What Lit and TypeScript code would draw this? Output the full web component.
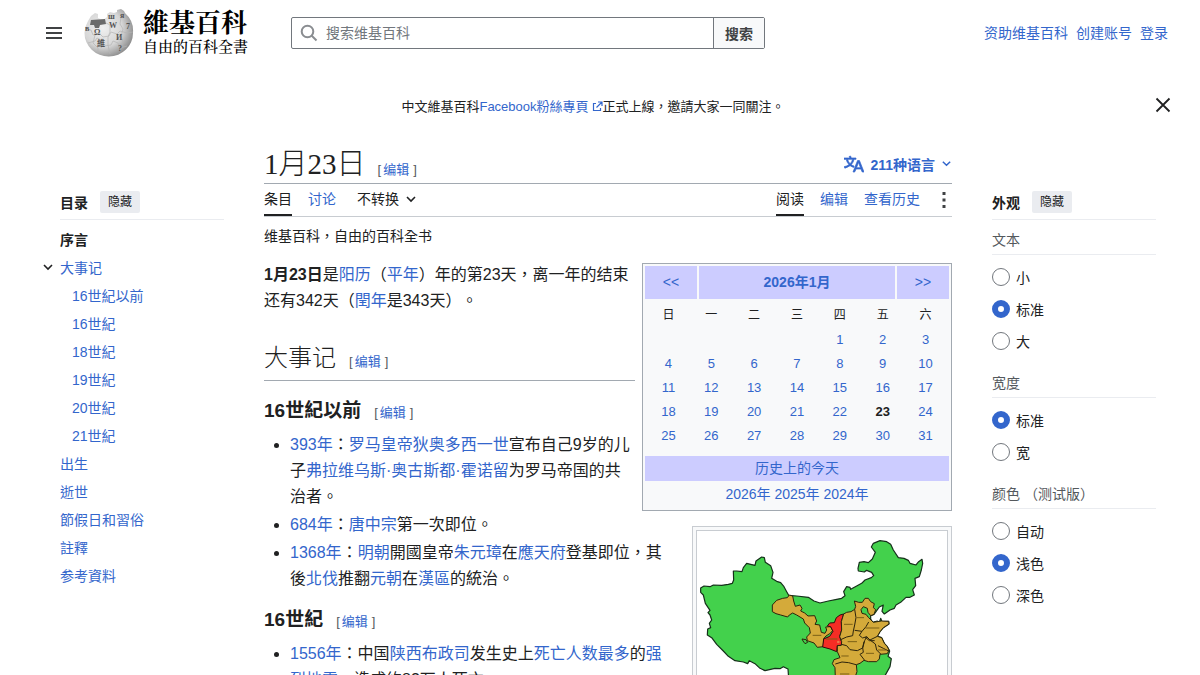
import { LitElement, html, css, svg } from "lit";
import { customElement, state } from "lit/decorators.js";

const chevron = svg`<path d="M2 4l4 4 4-4" fill="none" stroke="currentColor" stroke-width="1.6"/>`;

@customElement("wiki-globe")
class WikiGlobe extends LitElement {
  static styles = css`
    :host { display: block; width: 50px; height: 48px; }
    svg { display: block; }
    text { font-family: "Liberation Serif", "Noto Sans CJK TC", serif; font-size: 8px; font-weight: 700; fill: #555; }
  `;
  render() {
    return html`<svg width="50" height="48" viewBox="0 0 50 48" aria-hidden="true">
      <defs>
        <radialGradient id="ball" cx="38%" cy="40%" r="66%">
          <stop offset="0" stop-color="#f0f0f0"/><stop offset=".6" stop-color="#d6d6d6"/><stop offset="1" stop-color="#8a8a8a"/>
        </radialGradient>
      </defs>
      <path d="M11 4l3 1 0 4 5 2 4-3 0-3 3-2 4 1 3-1 0-2 4-1 3 2 1 2A24 24 0 0 1 49 24 24 23.500 0 0 1 25 47.500 24 23.500 0 0 1 .500 24 24 24 0 0 1 4 12l3-5z" fill="url(#ball)"/>
      <path d="M7 11l14-1 1 5-6 1-1 3-4 0-1-3-4 0z" fill="#6a6a6a"/>
      <path d="M1 20l6 1 2 5 7-1 3 3 6-1 2-4 6 2 3-3 7 2 6-1M4 34l7-2 2-3 6 3 1 5 7-1 2-4 5 2 2 5 7-2M11 26l-2 8 5 5 0 5M22 14l4 2 0 7-2 5 0 8 2 9M37 8l-1 7 3 5-2 7 2 6-3 9" fill="none" stroke="#b4b4b4" stroke-width=".7"/>
      <text x="10" y="26">Ω</text><text x="25" y="19">W</text><text x="32" y="31">И</text><text x="42" y="20">7</text><text x="13" y="37">維</text><text x="34" y="42">?</text><text x="1" y="22">в</text><text x="24" y="10">ш</text><text x="36" y="9">я</text>
    </svg>`;
  }
}

@customElement("china-map")
class ChinaMap extends LitElement {
  static styles = css`
    :host { display: block; }
    svg { display: block; width: 100%; }
    .land { fill: #43d14c; stroke: #15301a; stroke-width: 3.6; stroke-linejoin: round; }
    .felt { fill: #d4aa3a; stroke: #2b230c; stroke-width: 3; stroke-linejoin: round; }
    .center { fill: #f52d25; stroke: #2b0c0c; stroke-width: 3; stroke-linejoin: round; }
    .line { fill: none; stroke: #2b230c; stroke-width: 3; stroke-linejoin: round; }
    .tag { fill: none; stroke: #7a5f16; stroke-width: 3; }
  `;
  render() {
    return html`<svg viewBox="51 48 750 610" role="img" aria-label="1556">
      <path class="land" d="M62 219L72 213 90 215 100 210 125 211 145 208 157 205 161 195 160 168 170 168 186 170 190 158 200 145 212 148 225 151 228 138 245 126 253 128 256 142 272 152 279 172 275 190 290 199 302 203 312 215 320 230 326 241 350 243 385 247 402 258 420 264 445 258 470 253 485 250 495 242 491 230 500 215 510 217 512 223 530 213 545 205 555 195 574 188 581 182 575 172 560 166 553 171 535 168 534 160 538 142 552 140 565 143 577 132 586 112 574 96 580 85 600 77 620 80 632 88 640 105 655 128 672 130 685 136 690 145 708 150 716 140 726 133 728 145 724 165 718 185 705 190 707 212 698 224 703 240 690 247 678 247 662 262 648 270 643 280 630 285 613 297 606 289 610 270 598 276 588 290 582 298 572 302 572 312 578 322 592 318 597 326 602 310 606 320 626 319 627 327 610 338 600 350 592 364 605 368 613 385 622 395 629 408 624 424 634 431 630 455 615 482 600 530 560 575 500 610 440 600 400 580 350 555 332 520 326 490 324 462 310 455 300 461 285 460 255 467 240 460 225 446 208 437 203 446 190 441 165 437 145 424 130 408 110 388 95 368 82 360 83 342 92 338 88 325 95 315 90 300 84 293 90 286 76 265 70 240 62 232z"/>
      <path class="felt" d="M277 270L290 256 308 250 322 248 328 240 338 243 341 258 346 274 360 270 366 280 362 288 374 294 384 303 404 302 410 318 405 328 419 330 424 352 435 355 440 345 437 336 452 335 458 347 449 356 438 363 431 371 430 395 412 397 402 384 382 377 380 366 391 354 388 338 374 324 370 312 350 300 338 294 328 300 323 306 302 300 288 296 277 290z"/>
      <path class="center" d="M491 297L484 320 485 345 479 365 485 380 484 391 472 392 470 410 450 402 428 396 431 372 449 364 459 349 452 335 442 333 449 324 463 323 469 308 480 300z"/>
      <path class="felt" d="M491 297L500 292 513 290 524 283 527 274 523 258 536 262 547 262 555 250 565 250 572 260 583 266 580 278 587 284 582 298 572 302 564 292 562 280 550 275 543 284 546 295 558 298 565 307 580 322 604 318 626 319 627 327 610 338 600 350 592 364 605 368 613 385 622 395 627 405 622 416 600 418 598 432 590 440 565 440 552 436 540 445 529 449 531 470 524 490 524 540 470 545 466 490 465 458 457 446 462 434 480 428 472 410 472 392 484 391 485 380 479 365 485 345 484 320z"/>
      <path class="line" d="M524 283L528 308 524 330 520 348 518 362 500 366 482 374M524 346l22 3 12-14 8-14M546 349l-8 12 10 8 12-4M560 365l-6 12-6 22-16 8-22-3-10-12-16-4M560 365l10 10 22-11M570 375l16 12 4 18 12 12M552 380l-4 18 2 14-10 6 14 18M466 447l20-6 20 2 22 6M594 392l16 8 16 8M556 367l12 10 16 0"/>
      <path class="line" d="M366 372l12 2 5 8-8 4-6-8z"/>
      <path class="tag" d="M398 361h26M492 328h26M530 308h22M556 339h42M503 380h28M484 423h22M558 415h24M594 405h24M480 477h28M438 372h34"/>
      <circle cx="475" cy="381" r="4" fill="#e87b4b"/>
    </svg>`;
  }
}

@customElement("month-calendar")
class MonthCalendar extends LitElement {
  static styles = css`
    :host { display: block; box-sizing: border-box; border: 1px solid #a2a9b1; background: #f8f9fa; padding: 2px; font-size: 14px; text-align: center; }
    a { color: #3366cc; text-decoration: none; }
    .nav { display: grid; grid-template-columns: 52px 1fr 52px; gap: 2px; line-height: 33px; }
    .nav a, .today { background: #ccccff; }
    .current { font-weight: 700; }
    table { width: 300px; max-width: 100%; margin: 4px auto 8px; border-collapse: collapse; table-layout: fixed; font-size: 13px; line-height: 24px; }
    th, td { padding: 0; }
    th { font-size: 12px; font-weight: 400; line-height: 25px; }
    .today { display: block; line-height: 25px; }
    .years { line-height: 27px; }
  `;
  render() {
    const weeks = [0, 1, 2, 3, 4].map((w) => [0, 1, 2, 3, 4, 5, 6].map((d) => w * 7 + d - 3));
    return html`
      <div class="nav"><a href="#">&lt;&lt;</a><a class="current" href="#">2026年1月</a><a href="#">&gt;&gt;</a></div>
      <table>
        <thead><tr>${[..."日一二三四五六"].map((d) => html`<th scope="col">${d}</th>`)}</tr></thead>
        <tbody>${weeks.map((week) => html`<tr>${week.map((n) => html`<td>${n < 1 ? "" : n === 23 ? html`<b>23</b>` : html`<a href="#">${n}</a>`}</td>`)}</tr>`)}</tbody>
      </table>
      <a class="today" href="#">历史上的今天</a>
      <div class="years"><a href="#">2026年</a> <a href="#">2025年</a> <a href="#">2024年</a></div>`;
  }
}

interface Group { name: string; title: string; options: string[]; }

@customElement("app-root")
class AppRoot extends LitElement {
  @state() private chosen: Record<string, string> = { text: "标准", width: "标准", color: "浅色" };

  static styles = css`
    :host { display: block; height: 100vh; overflow: hidden; background: #fff; color: #202122; font-family: "Liberation Sans", "Noto Sans CJK TC", sans-serif; font-size: 14px; text-spacing-trim: space-all; }
    a { color: #3366cc; text-decoration: none; }
    button, input { font: inherit; color: inherit; margin: 0; }
    button { cursor: pointer; }
    svg { flex: none; }
    h1, h2, h3, p, ul { margin: 0; }

    .header { display: flex; align-items: center; height: 66px; padding: 0 32px 0 44px; }
    .menu { display: flex; border: 0; background: none; padding: 0; margin-right: 20px; }
    .logo { display: flex; align-items: center; gap: 9px; width: 167px; color: #000; }
    .brand { display: block; font-family: "Liberation Serif", "Noto Serif CJK TC", "Noto Sans CJK TC", serif; font-size: 26px; font-weight: 700; line-height: 28px; }
    .slogan { display: block; font-family: "Liberation Serif", "Noto Serif CJK TC", "Noto Sans CJK TC", serif; font-size: 15px; font-weight: 500; line-height: 18px; }
    .search { display: flex; flex: 0 1 474px; height: 32px; margin-left: 40px; box-sizing: border-box; border: 1px solid #72777d; border-radius: 2px; }
    .field { display: flex; align-items: center; flex: 1; gap: 8px; padding-left: 8px; color: #72777d; }
    .field input { flex: 1; min-width: 0; border: 0; padding: 0; outline: 0; background: none; }
    .field input::placeholder { color: #72777d; opacity: 1; }
    .search button { border: 0; border-left: 1px solid #72777d; background: #f8f9fa; padding: 0 11px; font-weight: 700; color: #404244; }
    .user { display: flex; gap: 8px; margin-left: auto; padding-bottom: 2px; }

    .notice { display: flex; align-items: center; height: 78px; padding: 0 28px 0 32px; font-size: 13px; }
    .notice p { flex: 1; text-align: center; }
    .external { margin-left: 3px; vertical-align: -1px; }
    .close { display: flex; border: 0; padding: 0; background: none; }

    .page { display: grid; grid-template-columns: 180px minmax(0, 1fr) 164px; column-gap: 40px; padding: 0 44px; }
    .toc { padding: 42px 0 0 16px; }
    .side { padding-top: 42px; }
    .panel-head { display: flex; align-items: center; gap: 12px; height: 31px; padding-bottom: 2px; border-bottom: 1px solid #eaecf0; font-weight: 700; }
    .panel-head button { border: 0; border-radius: 2px; background: #eaecf0; font-size: 12px; font-weight: 400; line-height: 22px; padding: 0 8px; }
    .toc ul { list-style: none; padding: 6px 0 0; line-height: 28px; }
    .toc ul ul { padding: 0 0 0 12px; }
    .toc .lead { color: #202122; font-weight: 700; }
    .expandable { position: relative; }
    .toggle { position: absolute; left: -18px; top: 7px; display: flex; border: 0; background: none; padding: 0; }

    .title-row { display: flex; align-items: center; justify-content: space-between; height: 39px; border-bottom: 1px solid #a2a9b1; }
    .title { display: flex; align-items: baseline; gap: 12px; }
    h1 { font: 300 29px/38px "Liberation Serif", "Noto Sans CJK TC", serif; }
    .edit { font-family: "Liberation Sans", "Noto Sans CJK TC", sans-serif; font-size: 13px; font-weight: 400; line-height: 16px; color: #54595d; }
    .edit a { margin: 0 4px 0 2px; }
    .languages { display: flex; align-items: center; gap: 6px; border: 0; background: none; padding: 0; color: #3366cc; font-weight: 700; }
    .tabs { display: flex; align-items: center; gap: 16px; height: 32px; border-bottom: 1px solid #c8ccd1; line-height: 30px; }
    .tabs a, .variant { height: 32px; box-sizing: border-box; }
    .tabs .selected { color: #202122; border-bottom: 2px solid #202122; }
    .variant { display: flex; align-items: center; gap: 6px; border: 0; background: none; padding: 0 0 2px 5px; }
    .views { display: flex; align-items: center; gap: 16px; margin-left: auto; }
    .more { display: flex; border: 0; background: none; padding: 0; }
    .tagline { line-height: 20px; margin: 9px 0 16px; }

    .article { font-size: 16px; line-height: 26px; }
    month-calendar { float: right; clear: right; width: 310px; margin: 1px 0 15px 7px; line-height: 24px; }
    .figure { float: right; clear: right; box-sizing: border-box; width: 260px; margin: 0 0 16px 16px; border: 1px solid #c8ccd1; background: #f8f9fa; padding: 3px; }
    .frame { border: 1px solid #c8ccd1; background: #fff; }
    .article h2 { display: flow-root; font: 300 24px/40px "Liberation Serif", "Noto Sans CJK TC", serif; border-bottom: 1px solid #a2a9b1; margin: 24px 0 15px; padding-bottom: 2px; }
    .article h3 { font-size: 19px; line-height: 30px; margin: 13px 0 6px; }
    .article .edit { margin-left: 13px; }
    .article ul { padding-left: 26px; }
    .article li { margin-bottom: 2px; }

    fieldset { border: 0; margin: 0 0 14px; padding: 0; min-width: 0; }
    legend { box-sizing: border-box; width: 100%; padding: 0 0 2px; margin-bottom: 6px; line-height: 24px; color: #54595d; border-bottom: 1px solid #eaecf0; }
    .groups { padding-top: 8px; }
    .option { display: flex; align-items: center; gap: 6px; height: 32px; }
    .option input { appearance: none; box-sizing: border-box; width: 18px; height: 18px; border: 1px solid #72777d; border-radius: 50%; background: #fff; }
    .option input:checked { border: 6px solid #3366cc; }
  `;

  private edit() {
    return html`<span class="edit">[<a href="#">编辑</a>]</span>`;
  }

  private group(g: Group) {
    return html`<fieldset><legend>${g.title}</legend>${g.options.map((o) => html`
      <label class="option"><input type="radio" name=${g.name} .checked=${this.chosen[g.name] === o}
        @change=${() => (this.chosen = { ...this.chosen, [g.name]: o })}>${o}</label>`)}</fieldset>`;
  }

  render() {
    const centuries = ["16世紀以前", "16世紀", "18世紀", "19世紀", "20世紀", "21世紀"];
    const sections = ["出生", "逝世", "節假日和習俗", "註釋", "参考資料"];
    const groups: Group[] = [
      { name: "text", title: "文本", options: ["小", "标准", "大"] },
      { name: "width", title: "宽度", options: ["标准", "宽"] },
      { name: "color", title: "颜色 （测试版）", options: ["自动", "浅色", "深色"] },
    ];
    return html`
      <header class="header">
        <button class="menu" aria-label="主菜单"><svg width="20" height="20" viewBox="0 0 20 20"><path d="M2 5h16M2 10h16M2 15h16" stroke="#404244" stroke-width="2"/></svg></button>
        <a class="logo" href="#"><wiki-globe></wiki-globe><span><span class="brand">維基百科</span><span class="slogan">自由的百科全書</span></span></a>
        <form class="search" @submit=${(e: Event) => e.preventDefault()}>
          <label class="field"><svg width="18" height="18" viewBox="0 0 18 18" fill="none" stroke="#8a8d91" stroke-width="2"><circle cx="7.5" cy="7.5" r="5.8"/><path d="M11.5 11.5l5 5"/></svg>
            <input type="search" aria-label="搜索维基百科" placeholder="搜索维基百科"></label>
          <button>搜索</button>
        </form>
        <nav class="user"><a href="#">资助维基百科</a><a href="#">创建账号</a><a href="#">登录</a></nav>
      </header>
      <div class="notice">
        <p>中文維基百科<a href="#">Facebook粉絲專頁<svg class="external" width="11" height="11" viewBox="0 0 11 11" fill="none" stroke="currentColor" stroke-width="1.2"><path d="M4 2.500H1.500v7h7V7M6 1h4v4M10 1L4.500 6.500"/></svg></a>正式上線，邀請大家一同關注。</p>
        <button class="close" aria-label="关闭"><svg width="18" height="18" viewBox="0 0 18 18"><path d="M2.500 2.500l13 13M15.500 2.500l-13 13" stroke="#202122" stroke-width="1.800"/></svg></button>
      </div>
      <div class="page">
        <nav class="toc">
          <div class="panel-head">目录<button>隐藏</button></div>
          <ul>
            <li><a class="lead" href="#">序言</a></li>
            <li class="expandable"><button class="toggle" aria-label="展开"><svg width="12" height="12" viewBox="0 0 12 12">${chevron}</svg></button><a href="#">大事记</a>
              <ul>${centuries.map((c) => html`<li><a href="#">${c}</a></li>`)}</ul></li>
            ${sections.map((s) => html`<li><a href="#">${s}</a></li>`)}
          </ul>
        </nav>
        <main>
          <div class="title-row">
            <div class="title"><h1>1月23日</h1>${this.edit()}</div>
            <button class="languages"><svg width="20" height="20" viewBox="0 0 20 20" fill="#3366cc" stroke="#3366cc" stroke-width=".7"><path d="M20 18h-1.440a.6.600 0 0 1-.4-.120.800.800 0 0 1-.230-.310L17 15h-5l-1 2.540a.8.800 0 0 1-.220.300.600.600 0 0 1-.4.140H9l4.550-11.470h1.890zm-3.530-4.310L14.890 9.500a12 12 0 0 1-.390-1.240q-.090.370-.190.690l-.190.560-1.580 4.190zm-6.300-1.580a13.400 13.400 0 0 1-2.910-1.410 11.460 11.460 0 0 0 2.810-5.370H12V4H7.310a4 4 0 0 0-.200-.560C6.870 2.790 6.600 2 6.600 2l-1.470.500s.4.890.600 1.500H0v1.330h2.150A11.230 11.230 0 0 0 5 10.700a17.200 17.200 0 0 1-5 2.100q.560.820.870 1.380a23.300 23.300 0 0 0 5.220-2.510 15.600 15.600 0 0 0 3.560 1.770zM3.630 5.330h4.910a8.100 8.100 0 0 1-2.450 4.450 9.100 9.100 0 0 1-2.460-4.450"/></svg>211种语言<svg width="11" height="11" viewBox="0 0 12 12">${chevron}</svg></button>
          </div>
          <div class="tabs">
            <a class="selected" href="#">条目</a><a href="#">讨论</a>
            <button class="variant">不转换<svg width="12" height="12" viewBox="0 0 12 12">${chevron}</svg></button>
            <div class="views"><a class="selected" href="#">阅读</a><a href="#">编辑</a><a href="#">查看历史</a>
              <button class="more" aria-label="更多"><svg width="16" height="20" viewBox="0 0 16 20" fill="#404244"><path d="M6.500 2h3v3h-3zM6.500 8.500h3v3h-3zM6.500 15h3v3h-3z"/></svg></button></div>
          </div>
          <p class="tagline">维基百科，自由的百科全书</p>
          <div class="article">
            <month-calendar></month-calendar>
            <div class="figure"><div class="frame"><china-map></china-map></div></div>
            <p><b>1月23日</b>是<a href="#">阳历</a>（<a href="#">平年</a>）年的第23天，离一年的结束还有342天（<a href="#">閏年</a>是343天）。</p>
            <h2>大事记${this.edit()}</h2>
            <h3>16世紀以前${this.edit()}</h3>
            <ul>
              <li><a href="#">393年</a>：<a href="#">罗马皇帝狄奥多西一世</a>宣布自己9岁的儿子<a href="#">弗拉维乌斯·奥古斯都·霍诺留</a>为罗马帝国的共治者。</li>
              <li><a href="#">684年</a>：<a href="#">唐中宗</a>第一次即位。</li>
              <li><a href="#">1368年</a>：<a href="#">明朝</a>開國皇帝<a href="#">朱元璋</a>在<a href="#">應天府</a>登基即位，其後<a href="#">北伐</a>推翻<a href="#">元朝</a>在<a href="#">漢區</a>的統治。</li>
            </ul>
            <h3>16世紀${this.edit()}</h3>
            <ul>
              <li><a href="#">1556年</a>：中国<a href="#">陕西布政司</a>发生史上<a href="#">死亡人数最多</a>的<a href="#">强烈地震</a>，造成约83万人死亡。</li>
            </ul>
          </div>
        </main>
        <aside class="side">
          <div class="panel-head">外观<button>隐藏</button></div>
          <div class="groups">${groups.map((g) => this.group(g))}</div>
        </aside>
      </div>`;
  }
}
